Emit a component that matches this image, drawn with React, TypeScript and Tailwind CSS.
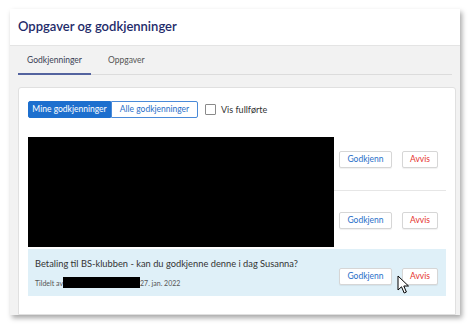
import React from "react";

function Btn({ label, red }: { label: string; red?: boolean }) {
  return (
    <div
      className={`h-[17px] ${red ? "w-[36px] text-[#e5322d]" : "w-[53px] text-[#2a6fc9]"} bg-white border border-[#d6d6d6] rounded-[2px] flex items-center justify-center text-[8.5px] shadow-[0_1px_1px_rgba(0,0,0,0.06)]`}
    >
      {label}
    </div>
  );
}

function Actions() {
  return (
    <div className="flex items-center gap-[10px]">
      <Btn label="Godkjenn" />
      <Btn label="Avvis" red />
    </div>
  );
}

export default function App() {
  return (
    <div className="w-[470px] h-[328px] bg-white relative overflow-hidden font-['Lato','Open_Sans',sans-serif]">
      <div className="ml-[10px] mt-[9px] w-[450px] h-[306px] bg-[#f2f2f2] shadow-[2px_3px_5px_rgba(0,0,0,0.35)] flex flex-col overflow-hidden">
        <div className="h-[37px] shrink-0 bg-white border-b border-[#e4e4e4] px-[8px] flex items-center text-[13px] font-semibold text-[#1e2b6a]">
          Oppgaver og godkjenninger
        </div>
        <div className="h-[29px] shrink-0 mx-[8px] border-b border-[#dcdcdc] flex items-end text-[8.5px] text-[#555]">
          <div className="w-[73px] text-center pb-[6px] border-b-2 border-[#54639f] -mb-px text-[#3a3f55]">
            Godkjenninger
          </div>
          <div className="ml-[17px] pb-[7px]">Oppgaver</div>
        </div>
        <div className="flex-1 ml-[8px] mr-[4px] mt-[12px] bg-white border border-[#e0e0e0] rounded-t-[3px] px-[9px] pt-[13px]">
          <div className="flex items-center h-[17px]">
            <div className="flex h-[17px] text-[8.5px]">
              <div className="w-[83px] bg-[#1d6fce] text-white flex items-center justify-center rounded-l-[2px] border border-[#1d6fce]">
                Mine godkjenninger
              </div>
              <div className="w-[87px] bg-white text-[#2a6fc9] flex items-center justify-center rounded-r-[2px] border border-[#4a8ad8]">
                Alle godkjenninger
              </div>
            </div>
            <div className="ml-[7px] w-[11px] h-[11px] border border-[#8a8a8a] rounded-[1px] bg-white" />
            <div className="ml-[5px] text-[9px] text-[#333]">Vis fullførte</div>
          </div>
          <div className="relative mt-[11px]">
            <div className="h-[62px] border-b border-[#e6e6e6] flex items-center justify-end pr-[8px]">
              <Actions />
            </div>
            <div className="h-[58px] flex items-center justify-end pr-[8px]">
              <Actions />
            </div>
            <div className="h-[47px] bg-[#dff0f8] flex items-center justify-between pl-[7px] pr-[8px]">
              <div className="flex flex-col">
                <div className="text-[9.3px] text-[#333]">
                  Betaling til BS-klubben - kan du godkjenne denne i dag Susanna?
                </div>
                <div className="flex items-center mt-[7px] text-[7px] text-[#555]">
                  <span>Tildelt av</span>
                  <span className="w-[77px] h-[11px] bg-black inline-block" />
                  <span>27. jan. 2022</span>
                </div>
              </div>
              <div className="mt-[8px]">
                <Actions />
              </div>
            </div>
            <div className="absolute left-0 top-[8px] w-[306px] h-[110px] bg-black" />
            <svg
              className="absolute left-[369px] top-[146px]"
              width="14"
              height="20"
              viewBox="0 0 14 20"
            >
              <path
                d="M1 1 L1 15 L4.5 11.8 L7.2 18 L9.4 17 L6.8 11 L11.5 11 Z"
                fill="white"
                stroke="black"
                strokeWidth="1"
                strokeLinejoin="round"
              />
            </svg>
          </div>
        </div>
      </div>
    </div>
  );
}
